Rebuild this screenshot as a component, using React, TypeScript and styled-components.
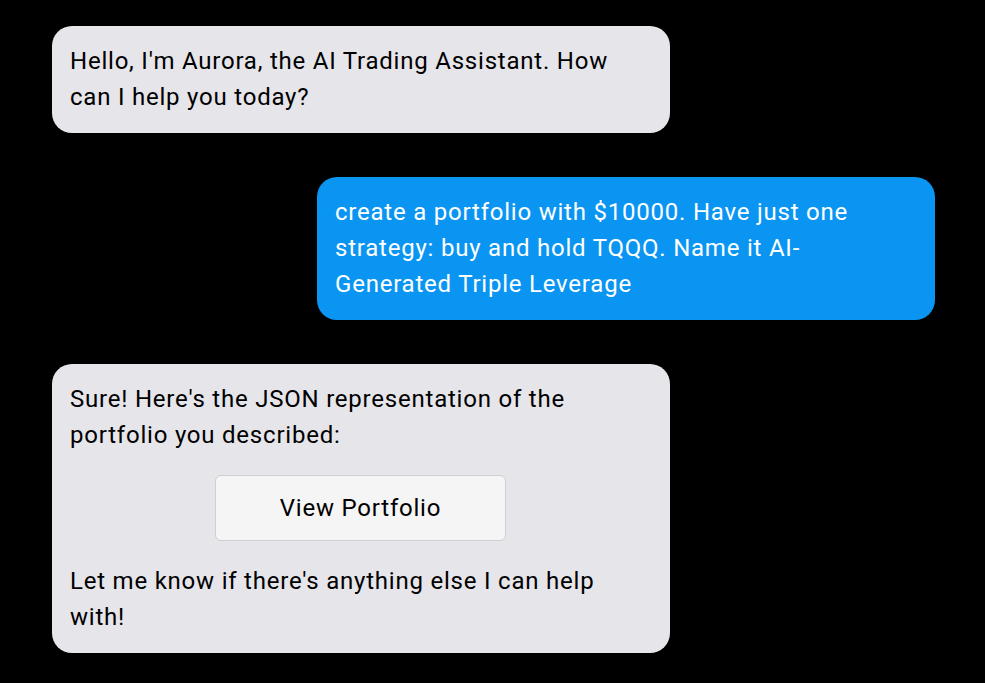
import React from "react";
import styled, { createGlobalStyle } from "styled-components";

const Global = createGlobalStyle`
  html, body { margin: 0; padding: 0; background: #000; }
  body { font-family: Roboto, "Noto Sans", sans-serif; }
`;

const Thread = styled.div`
  display: flex;
  flex-direction: column;
  gap: 44px;
  padding: 26px 50px 28px 52px;
`;

const Bubble = styled.div<{ $mine?: boolean }>`
  box-sizing: border-box;
  width: 618px;
  align-self: ${(p) => (p.$mine ? "flex-end" : "flex-start")};
  background: ${(p) => (p.$mine ? "#0a95f2" : "#e5e5ea")};
  color: ${(p) => (p.$mine ? "#ffffff" : "#000000")};
  border-radius: 20px;
  padding: 17px 24px 18px 18px;
  font-size: 24px;
  letter-spacing: 0.78px;
  line-height: 36px;
  display: flex;
  flex-direction: column;
  gap: 22px;
`;

const Text = styled.p`
  margin: 0;
`;

const ActionButton = styled.button`
  align-self: center;
  width: 291px;
  height: 66px;
  margin-left: 5px;
  background: #f5f5f5;
  border: 1px solid #cfcfcf;
  border-radius: 6px;
  font-family: Roboto, "Noto Sans", sans-serif;
  font-size: 24px;
  letter-spacing: 0.78px;
  color: #000;
  cursor: pointer;
`;

export default function App() {
  return (
    <>
      <Global />
      <Thread>
        <Bubble>
          <Text>Hello, I'm Aurora, the AI Trading Assistant. How can I help you today?</Text>
        </Bubble>
        <Bubble $mine>
          <Text>
            create a portfolio with $10000. Have just one strategy: buy and hold TQQQ. Name it AI-Generated
            Triple Leverage
          </Text>
        </Bubble>
        <Bubble>
          <Text>Sure! Here's the JSON representation of the portfolio you described:</Text>
          <ActionButton>View Portfolio</ActionButton>
          <Text>Let me know if there's anything else I can help with!</Text>
        </Bubble>
      </Thread>
    </>
  );
}
